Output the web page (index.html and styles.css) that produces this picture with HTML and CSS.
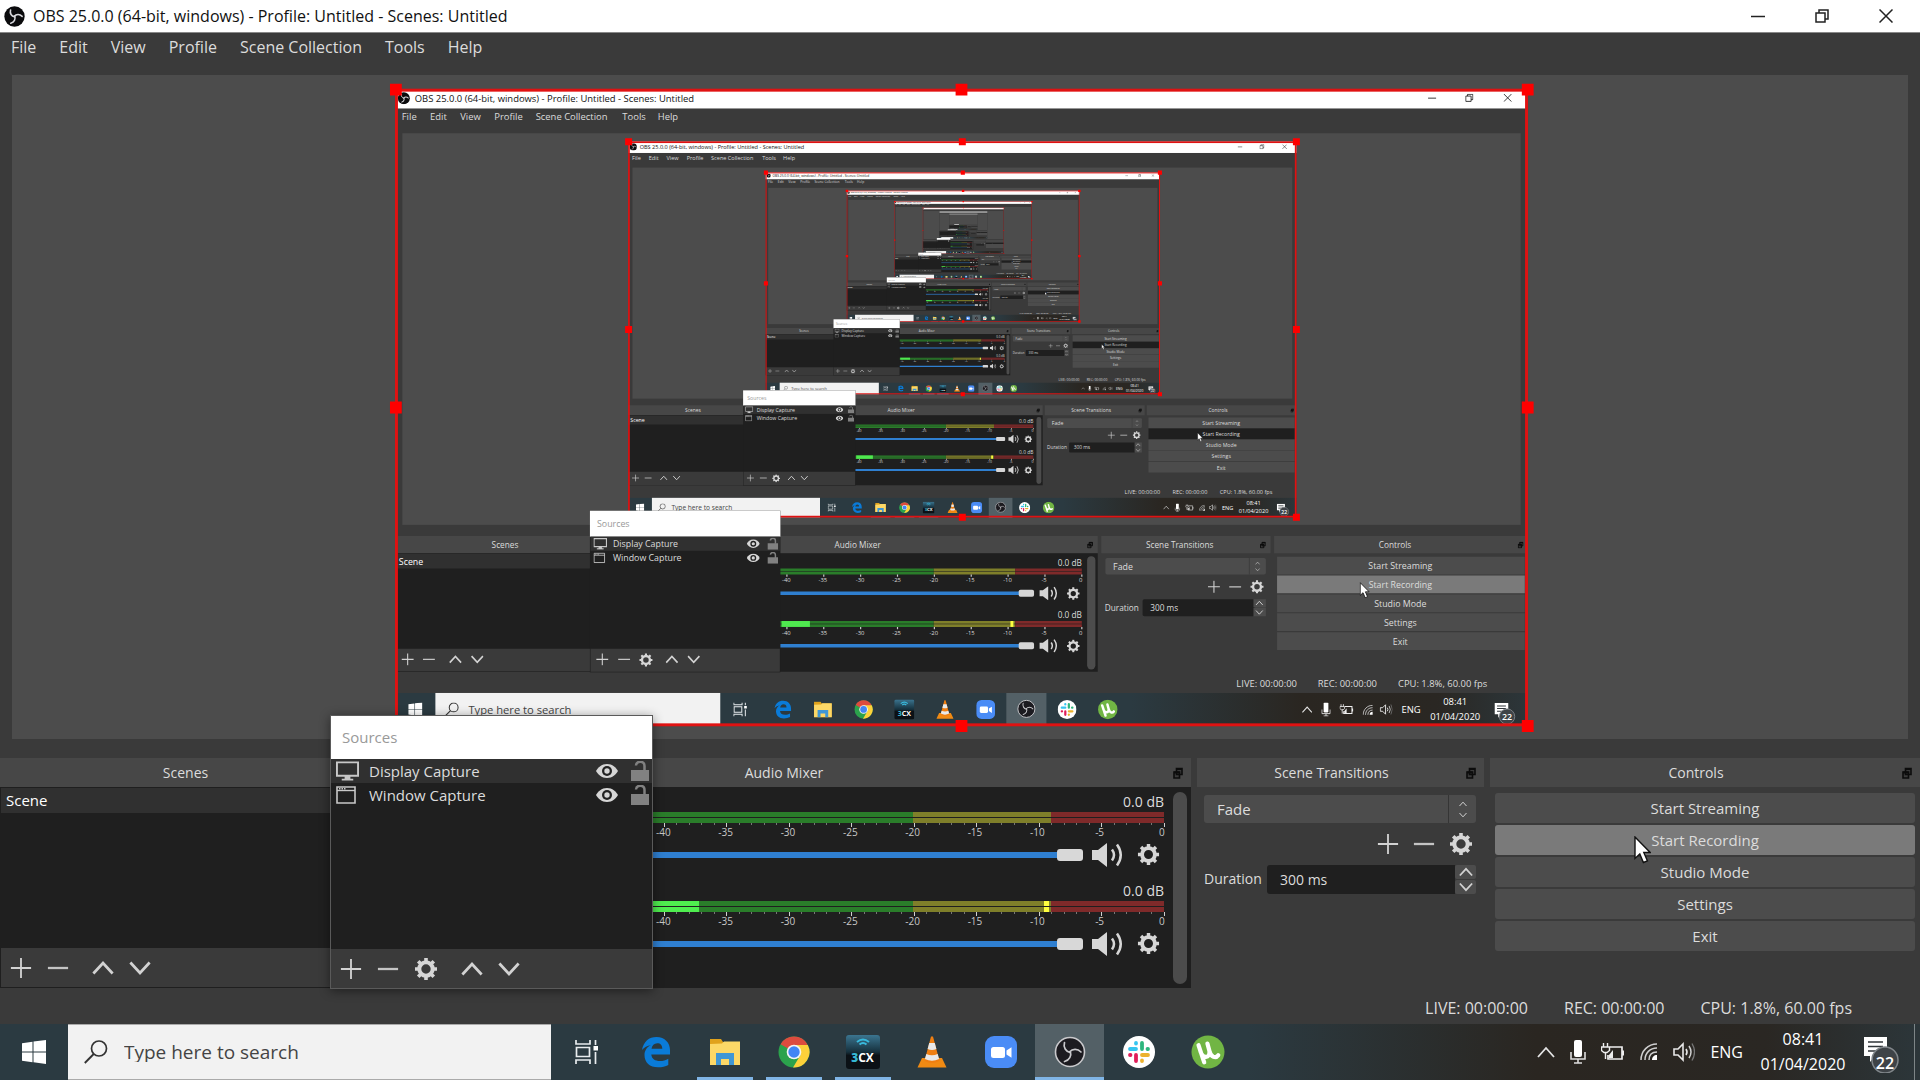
FILE: index.html
```html
<!DOCTYPE html>
<html lang="en">
<head>
<meta charset="utf-8">
<title>OBS 25.0.0 (64-bit, windows) - Profile: Untitled - Scenes: Untitled</title>
<link rel="stylesheet" href="styles.css">
</head>
<body>

<svg class="sprite" aria-hidden="true">
  <symbol id="i-obs" viewBox="0 0 32 32">
    <circle cx="16" cy="16" r="15.500" fill="#0b0b0d"/>
    <g fill="none" stroke="#d9d9dd" stroke-width="2.400" stroke-linecap="round">
      <path d="M16 16.500C11.500 15.500 8.500 11.500 10 6"/>
      <path d="M16 16.500C11.500 15.500 8.500 11.500 10 6" transform="rotate(120 16 16)"/>
      <path d="M16 16.500C11.500 15.500 8.500 11.500 10 6" transform="rotate(240 16 16)"/>
    </g>
  </symbol>
  <symbol id="i-obs-task" viewBox="0 0 32 32">
    <circle cx="16" cy="16" r="14.500" fill="#1c1b20" stroke="#c9c9cc" stroke-width="1.600"/>
    <g fill="none" stroke="#c9c9cc" stroke-width="1.700" stroke-linecap="round">
      <path d="M16 16.500C12 15.500 9 11.500 10.500 6.500"/>
      <path d="M16 16.500C12 15.500 9 11.500 10.500 6.500" transform="rotate(120 16 16)"/>
      <path d="M16 16.500C12 15.500 9 11.500 10.500 6.500" transform="rotate(240 16 16)"/>
    </g>
  </symbol>
  <symbol id="i-plus" viewBox="0 0 24 24"><path d="M12 1v22M1 12h22" stroke="#d2d2d2" stroke-width="2" fill="none"/></symbol>
  <symbol id="i-minus" viewBox="0 0 24 24"><path d="M1 12h22" stroke="#c4c4c4" stroke-width="2.500" fill="none"/></symbol>
  <symbol id="i-up" viewBox="0 0 24 24"><path d="M1.500 18L12 6.500 22.500 18" stroke="#d2d2d2" stroke-width="3" fill="none"/></symbol>
  <symbol id="i-down" viewBox="0 0 24 24"><path d="M1.500 6L12 17.500 22.500 6" stroke="#d2d2d2" stroke-width="3" fill="none"/></symbol>
  <symbol id="i-gear" viewBox="0 0 24 24">
    <circle cx="12" cy="12" r="6.700" fill="none" stroke="#d6d6d6" stroke-width="4"/>
    <path d="M12 1v4M12 19v4M1 12h4M19 12h4M4.200 4.200L7 7M17 17l2.800 2.800M4.200 19.800L7 17M17 7l2.800-2.800" stroke="#d6d6d6" stroke-width="3.600" fill="none"/>
  </symbol>
  <symbol id="i-speaker" viewBox="0 0 32 24">
    <path d="M0 7h6l9-7v24l-9-7H0z" fill="#d6d6d6"/>
    <path d="M20 6.500q4 5.500 0 11M25 1.500q7.500 10.500 0 21" fill="none" stroke="#d6d6d6" stroke-width="2.500"/>
  </symbol>
  <symbol id="i-eye" viewBox="0 0 22 16">
    <path d="M11 1C5.500 1 2 4.500 0 8c2 3.500 5.500 7 11 7s9-3.500 11-7c-2-3.500-5.500-7-11-7z" fill="#d6d6d6"/>
    <circle cx="11" cy="8" r="5" fill="#222"/><circle cx="11" cy="8" r="2.700" fill="#d6d6d6"/>
  </symbol>
  <symbol id="i-lock" viewBox="0 0 18 20">
    <path d="M0 9h18v11H0z" fill="#818181"/><path d="M5 4.500C5.500-.5 13.500-.5 13.500 5v5" fill="none" stroke="#818181" stroke-width="2.500"/>
  </symbol>
  <symbol id="i-monitor" viewBox="0 0 24 20">
    <path d="M1 1h22v14H1z" fill="none" stroke="#c8c8c8" stroke-width="2"/><path d="M9 15h6v3h3v2H6v-2h3z" fill="#c8c8c8"/>
  </symbol>
  <symbol id="i-window" viewBox="0 0 20 18">
    <path d="M1 1h18v16H1z" fill="none" stroke="#c8c8c8" stroke-width="1.600"/><path d="M1 4.500h18" stroke="#c8c8c8" stroke-width="1.400"/><path d="M3 2.700h7" stroke="#c8c8c8" stroke-width="1.500" stroke-dasharray="1.500 1"/>
  </symbol>
  <symbol id="i-float" viewBox="0 0 10 12"><path d="M3.500 1.500h5.500v6H3.500zM1 5h5.500v6H1z" fill="#3a3a3a" stroke="#0c0c0c" stroke-width="1.600"/><path d="M1 5.500h5.500M3.500 2h5.500" stroke="#0c0c0c" stroke-width="2"/></symbol>
  <symbol id="i-min" viewBox="0 0 14 14"><path d="M0 7.500h14" stroke="#222" stroke-width="1.500"/></symbol>
  <symbol id="i-restore" viewBox="0 0 14 14"><path d="M1 4h9v9H1zM4 4V1h9v9h-3" fill="none" stroke="#222" stroke-width="1.500"/></symbol>
  <symbol id="i-close" viewBox="0 0 14 14"><path d="M.5.5l13 13M13.500.5l-13 13" stroke="#222" stroke-width="1.500"/></symbol>
  <symbol id="i-cursor" viewBox="0 0 17 28"><path d="M1 1v21.500l4.800-4.500 3.600 8.500 4-1.700-3.600-8.300h6.400z" fill="#fff" stroke="#111" stroke-width="1.400"/></symbol>
  <symbol id="i-start" viewBox="0 0 24 24"><path d="M0 3.300L10.500 1.800V11.500H0zM11.500 1.600L24 0v11.500H11.500zM0 12.500h10.500v9.700L0 20.700zM11.500 12.500H24V24l-12.500-1.700z" fill="#fff"/></symbol>
  <symbol id="i-search" viewBox="0 0 24 24"><circle cx="15" cy="8.500" r="7.500" fill="none" stroke="#333" stroke-width="1.700"/><path d="M9.700 14L.8 23" stroke="#333" stroke-width="1.900"/></symbol>
  <symbol id="i-taskview" viewBox="0 0 24 24"><path d="M1 0v4h14V0M1 24v-4h14v4M1.500 7.500h13v9h-13zM20.500 0v5M20.500 12v12" fill="none" stroke="#e8ecee" stroke-width="1.700"/><path d="M18.500 6h4.500v4.500h-4.500z" fill="#fff"/></symbol>
  <symbol id="i-edge" viewBox="0 0 32 32"><path d="M2 14C3.500 5.500 9 1 16.500 1 25 1 30 7 30 14v4.500H11.300c.4 4.500 4 6.500 8.500 6.500 3.200 0 6-.9 8.500-2.300v6.200C25.500 30.500 22 31.300 18 31.300 9.700 31.300 4.500 26.500 4.500 19 4.500 14.500 7 11 11 9 7.500 9.500 4 11.500 2 14zM11.500 12.800h10.800c0-3.500-1.800-5.500-5-5.500-3.300 0-5.200 2.200-5.800 5.500z" fill="#0a7bd8"/></symbol>
  <symbol id="i-folder" viewBox="0 0 32 28"><path d="M1 1h11l2 3h17v23H1z" fill="#e0a21c"/><path d="M1 6l12-.5 2-2h16V27H1z" fill="#fcd867"/><path d="M7 15h18v12h-5v-6h-8v6H7z" fill="#3f97d6"/></symbol>
  <symbol id="i-chrome" viewBox="0 0 32 32">
    <circle cx="16" cy="16" r="15.500" fill="#2ba24c"/>
    <path d="M16 16L2.600 8.200A15.500 15.500 0 0 1 29.500 8.500z" fill="#dd4b3e"/>
    <path d="M16 9h13.800A15.500 15.500 0 0 1 15 31.500L22.500 19z" fill="#fdd13a"/>
    <circle cx="16" cy="16" r="7.300" fill="#f5f5f5"/><circle cx="16" cy="16" r="5.700" fill="#4285f4"/>
  </symbol>
  <symbol id="i-3cx" viewBox="0 0 34 34">
    <linearGradient id="cxbg" x2="0" y2="1"><stop offset="0" stop-color="#3b7590"/><stop offset=".5" stop-color="#16303c"/><stop offset=".6" stop-color="#0b1116"/></linearGradient>
    <rect width="34" height="34" rx="3" fill="url(#cxbg)"/>
    <path d="M11 7q6-5 12 0M13.500 9.500q3.500-3 7 0" fill="none" stroke="#38b9dc" stroke-width="2"/>
  </symbol>
  <symbol id="i-vlc" viewBox="0 0 30 32">
    <path d="M5 22h20l4.500 9.500H.5z" fill="#f08a13"/><path d="M14 .5h2L22.500 25q-7.500 4-15 0z" fill="#ef7f12"/>
    <path d="M12.200 7h5.600l1.600 6q-4.400 2-8.800 0zM9.300 18q5.700 2.500 11.400 0l1.400 5q-7.100 3.500-14.200 0z" fill="#e9e9e9"/>
  </symbol>
  <symbol id="i-zoom" viewBox="0 0 32 32"><rect width="32" height="32" rx="9" fill="#4a8cf6"/><rect x="6" y="11" width="14" height="11" rx="2.500" fill="#fff"/><path d="M21.500 14.500l5-3.300v10.600l-5-3.300z" fill="#fff"/></symbol>
  <symbol id="i-slack" viewBox="0 0 32 32">
    <circle cx="16" cy="16" r="16" fill="#fff"/>
    <g stroke-width="3.800" stroke-linecap="round" fill="none">
      <path d="M13 7v.5M7 13h6" stroke="#36c5f0"/><path d="M19 7v6M24.500 13h.5" stroke="#2eb67d"/>
      <path d="M19 19h6M19 24.500v.5" stroke="#ecb22e"/><path d="M13 19v6M7 19h.5" stroke="#e01e5a"/>
    </g>
  </symbol>
  <symbol id="i-utorrent" viewBox="0 0 34 34"><circle cx="17" cy="17" r="16.500" fill="#71b544"/><path d="M8 9.500L12.500 27M9 13.500C10.500 24 19 24 18.500 16L17 8.500M18.500 16c1 7 6 8 8.500 5" transform="rotate(-4 17 17)" fill="none" stroke="#fff" stroke-width="4.200" stroke-linecap="round"/></symbol>
  <symbol id="i-tray-up" viewBox="0 0 18 12"><path d="M1 11l8-9 8 9" fill="none" stroke="#e4e4e4" stroke-width="1.800"/></symbol>
  <symbol id="i-mic" viewBox="0 0 16 24"><rect x="4" y="0" width="8" height="17" rx="2" fill="#fff"/><path d="M1 12v7h14v-7M8 19v4M4 23h8" fill="none" stroke="#ddd" stroke-width="1.600"/></symbol>
  <symbol id="i-battery" viewBox="0 0 24 20"><path d="M9 5h12v12H7v-4" fill="none" stroke="#eee" stroke-width="1.700"/><path d="M22 8.500v5" stroke="#eee" stroke-width="2"/><path d="M2.500 1v4M6.500 1v4M.5 5h8v3.500l-2.500 2h-3l-2.500-2zM4.500 10v7" fill="none" stroke="#eee" stroke-width="1.400"/><path d="M8 13l4-5v8H8z" fill="#eee"/></symbol>
  <symbol id="i-wifi" viewBox="0 0 18 18"><g fill="none" stroke="#cfcfcf" stroke-width="1.500"><path d="M1 17C1 8 8 1 17 1M5 17C5 10 10 5 17 5M9 17c0-5 3-8 8-8"/></g><path d="M17 12v5h-5c0-3 2-5 5-5z" fill="#fff"/></symbol>
  <symbol id="i-volume" viewBox="0 0 22 20"><path d="M1 7h4l5-5v16l-5-5H1zM13 7q2 3 0 6" fill="none" stroke="#e8e8e8" stroke-width="1.600"/><path d="M16 4q4 6 0 12" fill="none" stroke="#d0d0d0" stroke-width="1.500"/><path d="M19 1.500q5 8.500 0 17" fill="none" stroke="#777" stroke-width="1.300"/></symbol>
  <symbol id="i-notify" viewBox="0 0 38 36">
    <path d="M1 0h23v19H12l-5 6v-6H1z" fill="#fff"/><path d="M5 5h15M5 9.500h15M5 14h10" stroke="#30363a" stroke-width="1.700"/>
    <circle cx="22" cy="23" r="13" fill="#3e4347" stroke="#80868a" stroke-width="1.500"/>
  </symbol>
</svg>

<header class="titlebar">
  <svg class="ic logo"><use href="#i-obs"/></svg>
  <h1>OBS 25.0.0 (64-bit, windows) - Profile: Untitled - Scenes: Untitled</h1>
  <div class="winbtns">
    <button aria-label="Minimize"><svg class="ic s14"><use href="#i-min"/></svg></button>
    <button aria-label="Restore"><svg class="ic s14"><use href="#i-restore"/></svg></button>
    <button aria-label="Close"><svg class="ic s14"><use href="#i-close"/></svg></button>
  </div>
</header>

<nav class="menubar">
  <a href="#">File</a><a href="#">Edit</a><a href="#">View</a><a href="#">Profile</a><a href="#">Scene Collection</a><a href="#">Tools</a><a href="#">Help</a>
</nav>

<main class="preview">
  <svg class="canvas" viewBox="0 0 1920 1080" role="img" aria-label="Display capture preview">
    <defs>
      <linearGradient id="bar">
        <stop offset="0" stop-color="#2b3a41"/><stop offset=".65" stop-color="#2b3a41"/><stop offset=".8" stop-color="#2a2621"/><stop offset=".92" stop-color="#2a2723"/><stop offset="1" stop-color="#2c363a"/>
      </linearGradient>
    </defs>
    <g id="desk">
      <rect width="1920" height="1080" fill="#3a3a3a"/>
      <rect width="1920" height="33" fill="#fff"/>
      <use href="#i-obs" x="4" y="5" width="21" height="21"/>
      <text x="33" y="22" class="dark lg">OBS 25.0.0 (64-bit, windows) - Profile: Untitled - Scenes: Untitled</text>
      <use href="#i-min" x="1751" y="8" width="14" height="14"/><use href="#i-restore" x="1814" y="8" width="14" height="14"/><use href="#i-close" x="1879" y="8" width="14" height="14"/>
      <g class="lg"><text x="11" y="53">File</text><text x="59" y="53">Edit</text><text x="110" y="53">View</text><text x="168" y="53">Profile</text><text x="238" y="53">Scene Collection</text><text x="385" y="53">Tools</text><text x="445" y="53">Help</text></g>
      <rect x="12" y="75" width="1896" height="664" fill="#4c4c4c"/>
      <path d="M0 758h371v29H0zM377 758h814v29H377zM1197 758h287v29h-287zM1490 758h430v29h-430z" fill="#474747"/>
      <path d="M0 787h371v201H0zM377 787h814v201H377z" fill="#1f1f1f"/>
      <path d="M1 788h369v25H1z" fill="#303030"/><path d="M2 949h367v38H2z" fill="#3a3a3a"/>
      <g class="sm"><text x="186" y="778" class="mid">Scenes</text><text x="784" y="778" class="mid">Audio Mixer</text><text x="1330" y="778" class="mid">Scene Transitions</text><text x="1695" y="778" class="mid">Controls</text></g>
      <use href="#i-float" x="1173" y="767" width="10" height="12"/><use href="#i-float" x="1466" y="767" width="10" height="12"/><use href="#i-float" x="1903" y="767" width="10" height="12"/>
      <text x="6" y="807" class="white">Scene</text>
      <use href="#i-plus" x="10" y="956" width="22" height="22"/><use href="#i-minus" x="46" y="956" width="22" height="22"/><use href="#i-up" x="91" y="956" width="22" height="22"/><use href="#i-down" x="128" y="956" width="22" height="22"/>
      <g id="strip">
        <text x="1164" y="808" class="end sm">0.0 dB</text>
        <path d="M414 813h499v10H414z" fill="#2a7d2a"/><path d="M913 813h138v10H913z" fill="#7f7f2a"/><path d="M1051 813h113v10h-113z" fill="#7f2a2a"/><path d="M414 818h750" stroke="#1f1f1f"/>
        <path d="M663 825h502" stroke="#ccc" stroke-width="4" stroke-dasharray="2 60.500"/>
        <g class="tiny"><text x="663" y="836">-40</text><text x="725" y="836">-35</text><text x="788" y="836">-30</text><text x="850" y="836">-25</text><text x="913" y="836">-20</text><text x="975" y="836">-15</text><text x="1038" y="836">-10</text><text x="1100" y="836">-5</text><text x="1162" y="836">0</text></g>
        <path d="M414 855h645" stroke="#2f7fd0" stroke-width="6"/><rect x="1057" y="849" width="26" height="12" rx="3" fill="#d6d6d6"/>
        <use href="#i-speaker" x="1092" y="843" width="32" height="24"/><use href="#i-gear" x="1138" y="844" width="23" height="23"/>
      </g>
      <use href="#strip" y="89"/>
      <path d="M655 902h48v10h-48z" fill="#4fe84f"/><path d="M1043 902h5v10h-5z" fill="#ffff40"/>
      <rect x="1173" y="792" width="14" height="192" rx="7" fill="#4c4c4c"/>
      <rect x="1204" y="795" width="272" height="28" rx="3" fill="#4c4c4c"/><path d="M1448 795v28" stroke="#333"/><text x="1217" y="816">Fade</text>
      <use href="#i-up" x="1457" y="800" width="10" height="8"/><use href="#i-down" x="1457" y="811" width="10" height="8"/>
      <use href="#i-plus" x="1377" y="833" width="22" height="22"/><use href="#i-minus" x="1413" y="833" width="22" height="22"/><use href="#i-gear" x="1449" y="832" width="24" height="24"/>
      <text x="1203" y="885" class="sm">Duration</text><rect x="1267" y="865" width="190" height="29" rx="3" fill="#1f1f1f"/><text x="1280" y="885" class="sm">300 ms</text>
      <path d="M1455 865h21v14h-21zM1455 880h21v14h-21z" fill="#4c4c4c"/><use href="#i-up" x="1457" y="865" width="16" height="13"/><use href="#i-down" x="1457" y="881" width="16" height="13"/>
      <path d="M1495 793h420v30h-420zM1495 857h420v30h-420zM1495 889h420v30h-420zM1495 921h420v30h-420z" fill="#4c4c4c"/><path d="M1495 825h420v30h-420z" class="hot"/>
      <g class="mid"><text x="1704" y="814">Start Streaming</text><text x="1704" y="846">Start Recording</text><text x="1704" y="878">Studio Mode</text><text x="1704" y="910">Settings</text><text x="1704" y="943">Exit</text></g>
      <use href="#i-cursor" x="1635" y="836" width="17" height="28"/>
      <g class="lg"><text x="1426" y="1014">LIVE: 00:00:00</text><text x="1564" y="1014">REC: 00:00:00</text><text x="1700" y="1014">CPU: 1.8%, 60.00 fps</text></g>
      <rect y="1024" width="1920" height="56" fill="url(#bar)"/>
      <rect x="68" y="1024" width="483" height="56" fill="#f2f2f2"/>
      <use href="#i-start" x="22" y="1040" width="24" height="24"/><use href="#i-search" x="84" y="1040" width="24" height="24"/>
      <text x="124" y="1059" class="find">Type here to search</text>
      <path d="M1036 1024h68v56h-68z" fill="#536066"/><path d="M697 1077h56v3h-56zM766 1077h56v3h-56zM835 1077h56v3h-56zM1036 1077h68v3h-68z" fill="#80b5e6"/>
      <use href="#i-taskview" x="573" y="1040" width="24" height="24"/><use href="#i-edge" x="641" y="1036" width="32" height="32"/><use href="#i-folder" x="709" y="1038" width="32" height="28"/><use href="#i-chrome" x="778" y="1036" width="32" height="32"/><use href="#i-3cx" x="846" y="1035" width="34" height="34"/><text x="863" y="1063" class="mid cx"><tspan class="cx3">3</tspan>CX</text><use href="#i-vlc" x="917" y="1036" width="30" height="32"/><use href="#i-zoom" x="985" y="1036" width="32" height="32"/><use href="#i-obs-task" x="1054" y="1035" width="32" height="32"/><use href="#i-slack" x="1123" y="1036" width="32" height="32"/><use href="#i-utorrent" x="1191" y="1035" width="34" height="34"/>
      <use href="#i-tray-up" x="1537" y="1046" width="18" height="12"/><use href="#i-mic" x="1570" y="1040" width="16" height="24"/><use href="#i-battery" x="1601" y="1042" width="24" height="20"/><use href="#i-wifi" x="1640" y="1044" width="18" height="18"/><use href="#i-volume" x="1669" y="1042" width="22" height="20"/>
      <g class="lg"><text x="1706" y="1058" class="white">ENG</text><text x="1797" y="1044" class="mid white">08:41</text><text x="1797" y="1069" class="mid white">01/04/2020</text></g>
      <use href="#i-notify" x="1863" y="1041" width="38" height="36"/><text x="1885" y="1070" class="mid white badge">22</text>
    </g>
    <g class="deep" transform="translate(395 89) scale(.59)"><use href="#desk"/>
      <g transform="translate(395 89) scale(.59)"><use href="#desk"/>
        <g transform="translate(395 89) scale(.59)"><use href="#desk"/>
          <g transform="translate(395 89) scale(.59)"><use href="#desk"/>
            <g transform="translate(395 89) scale(.59)"><use href="#desk"/>
              <g transform="translate(395 89) scale(.59)"><use href="#desk"/>
                <g transform="translate(395 89) scale(.59)"><use href="#desk"/><use href="#sources"/></g>
              <use href="#sources"/></g>
            <use href="#sources"/><use href="#frame"/></g>
          <use href="#sources"/><use href="#frame"/></g>
        <use href="#sources"/><use href="#frame"/></g>
      <use href="#sources"/><use href="#frame"/></g>
    <use href="#sources"/><use href="#frame"/></g>
    <g id="sources">
      <rect x="330" y="715" width="323" height="274" fill="#1f1f1f"/><rect x="330" y="715" width="323" height="44" fill="#fff"/>
      <text x="342" y="742" class="pale">Sources</text>
      <rect x="331" y="759" width="321" height="24" fill="#303030"/><rect x="331" y="949" width="321" height="39" fill="#3a3a3a"/>
      <use href="#i-monitor" x="336" y="761" width="23" height="20"/><use href="#i-window" x="336" y="786" width="20" height="18"/>
      <text x="369" y="777">Display Capture</text><text x="369" y="801">Window Capture</text>
      <use href="#i-eye" x="596" y="763" width="22" height="16"/><use href="#i-eye" x="596" y="787" width="22" height="16"/>
      <use href="#i-lock" x="631" y="761" width="18" height="20"/><use href="#i-lock" x="631" y="785" width="18" height="20"/>
      <use href="#i-plus" x="340" y="956" width="22" height="22"/><use href="#i-minus" x="377" y="956" width="22" height="22"/><use href="#i-gear" x="413" y="956" width="24" height="24"/><use href="#i-up" x="458" y="956" width="22" height="22"/><use href="#i-down" x="495" y="956" width="22" height="22"/>
    </g>
    <g id="frame">
      <rect x="2" y="2" width="1916" height="1076" fill="none" stroke="#e01212" stroke-width="5"/>
      <path d="M-9-9h20v20H-9zM950-9h20v20h-20zM1910-9h20v20h-20zM-9 530h20v20H-9zM1910 530h20v20h-20zM-9 1070h20v20H-9zM950 1070h20v20h-20zM1910 1070h20v20h-20z" fill="#f00"/>
    </g>
  </svg>
</main>

<div class="docks">
  <section class="dock">
    <h2 class="plain"><span>Scenes</span></h2>
    <div class="listbox">
      <ul class="scenes"><li>Scene</li></ul>
      <div class="tools">
        <button aria-label="Add scene"><svg class="ic s22"><use href="#i-plus"/></svg></button>
        <button aria-label="Remove scene"><svg class="ic s22"><use href="#i-minus"/></svg></button>
        <button class="sep" aria-label="Move scene up"><svg class="ic s22"><use href="#i-up"/></svg></button>
        <button aria-label="Move scene down"><svg class="ic s22"><use href="#i-down"/></svg></button>
      </div>
    </div>
  </section>

  <section class="dock">
    <h2 class="wide"><span>Audio Mixer</span><svg class="ic float"><use href="#i-float"/></svg></h2>
    <div class="mixer">
      <div class="strips">
        <div class="strip">
          <output>0.0 dB</output>
          <div class="meter"></div>
          <div class="ticks"></div>
          <div class="scale"><span>-60</span><span>-55</span><span>-50</span><span>-45</span><span>-40</span><span>-35</span><span>-30</span><span>-25</span><span>-20</span><span>-15</span><span>-10</span><span>-5</span><span>0</span></div>
          <div class="fader">
            <input type="range" aria-label="Desktop volume" value="100">
            <button aria-label="Mute desktop"><svg class="ic spk"><use href="#i-speaker"/></svg></button>
            <button aria-label="Desktop audio settings"><svg class="ic s23"><use href="#i-gear"/></svg></button>
          </div>
        </div>
        <div class="strip">
          <output>0.0 dB</output>
          <div class="meter"><i class="level" style="width:38%"></i><i class="peak" style="left:84%"></i></div>
          <div class="ticks"></div>
          <div class="scale"><span>-60</span><span>-55</span><span>-50</span><span>-45</span><span>-40</span><span>-35</span><span>-30</span><span>-25</span><span>-20</span><span>-15</span><span>-10</span><span>-5</span><span>0</span></div>
          <div class="fader">
            <input type="range" aria-label="Microphone volume" value="100">
            <button aria-label="Mute microphone"><svg class="ic spk"><use href="#i-speaker"/></svg></button>
            <button aria-label="Microphone settings"><svg class="ic s23"><use href="#i-gear"/></svg></button>
          </div>
        </div>
      </div>
      <div class="scroll"></div>
    </div>
  </section>

  <section class="dock">
    <h2><span>Scene Transitions</span><svg class="ic float"><use href="#i-float"/></svg></h2>
    <div class="trans">
      <div class="combo">
        <select aria-label="Transition"><option>Fade</option></select>
        <span class="arrows"><svg class="ic tinyarrow"><use href="#i-up"/></svg><svg class="ic tinyarrow"><use href="#i-down"/></svg></span>
      </div>
      <div class="tbtns">
        <button aria-label="Add transition"><svg class="ic s22"><use href="#i-plus"/></svg></button>
        <button aria-label="Remove transition"><svg class="ic s22"><use href="#i-minus"/></svg></button>
        <button aria-label="Transition properties"><svg class="ic s24"><use href="#i-gear"/></svg></button>
      </div>
      <div class="duration">
        <label for="dur">Duration</label>
        <input id="dur" type="text" value="300 ms">
        <span class="spin"><button aria-label="Increase"><svg class="ic s14"><use href="#i-up"/></svg></button><button aria-label="Decrease"><svg class="ic s14"><use href="#i-down"/></svg></button></span>
      </div>
    </div>
  </section>

  <section class="dock">
    <h2><span>Controls</span><svg class="ic float"><use href="#i-float"/></svg></h2>
    <div class="controls">
      <button>Start Streaming</button>
      <button class="hover">Start Recording<svg class="ic cursor"><use href="#i-cursor"/></svg></button>
      <button>Studio Mode</button>
      <button>Settings</button>
      <button>Exit</button>
    </div>
  </section>

  <section class="popup">
    <h2>Sources</h2>
    <ul>
      <li class="sel"><svg class="ic mon"><use href="#i-monitor"/></svg><span>Display Capture</span><svg class="ic eye"><use href="#i-eye"/></svg><svg class="ic lock"><use href="#i-lock"/></svg></li>
      <li><svg class="ic win"><use href="#i-window"/></svg><span>Window Capture</span><svg class="ic eye"><use href="#i-eye"/></svg><svg class="ic lock"><use href="#i-lock"/></svg></li>
    </ul>
    <div class="tools">
      <button aria-label="Add source"><svg class="ic s22"><use href="#i-plus"/></svg></button>
      <button aria-label="Remove source"><svg class="ic s22"><use href="#i-minus"/></svg></button>
      <button aria-label="Source properties"><svg class="ic s24"><use href="#i-gear"/></svg></button>
      <button class="sep" aria-label="Move source up"><svg class="ic s22"><use href="#i-up"/></svg></button>
      <button aria-label="Move source down"><svg class="ic s22"><use href="#i-down"/></svg></button>
    </div>
  </section>
</div>

<div class="status"><span>LIVE: 00:00:00</span><span>REC: 00:00:00</span><span>CPU: 1.8%, 60.00 fps</span></div>

<footer class="taskbar">
  <button class="start" aria-label="Start"><svg class="ic s24"><use href="#i-start"/></svg></button>
  <label class="find-box"><svg class="ic s24"><use href="#i-search"/></svg><input type="text" placeholder="Type here to search" aria-label="Search"></label>
  <div class="apps">
    <button aria-label="Task View"><svg class="ic s24"><use href="#i-taskview"/></svg></button>
    <button aria-label="Edge"><svg class="ic s32"><use href="#i-edge"/></svg></button>
    <button class="open" aria-label="File Explorer"><svg class="ic folder"><use href="#i-folder"/></svg></button>
    <button class="open" aria-label="Chrome"><svg class="ic s32"><use href="#i-chrome"/></svg></button>
    <button class="open" aria-label="3CX"><svg class="ic s34"><use href="#i-3cx"/></svg><span class="cx-label"><b>3</b>CX</span></button>
    <button aria-label="VLC"><svg class="ic s32"><use href="#i-vlc"/></svg></button>
    <button aria-label="Zoom"><svg class="ic s32"><use href="#i-zoom"/></svg></button>
    <button class="open active" aria-label="OBS"><svg class="ic s32"><use href="#i-obs-task"/></svg></button>
    <button aria-label="Slack"><svg class="ic s32"><use href="#i-slack"/></svg></button>
    <button aria-label="uTorrent"><svg class="ic s34"><use href="#i-utorrent"/></svg></button>
  </div>
  <div class="tray">
    <svg class="ic t-up"><use href="#i-tray-up"/></svg>
    <svg class="ic t-mic"><use href="#i-mic"/></svg>
    <svg class="ic t-bat"><use href="#i-battery"/></svg>
    <svg class="ic t-wifi"><use href="#i-wifi"/></svg>
    <svg class="ic t-vol"><use href="#i-volume"/></svg>
    <span>ENG</span>
    <time class="clock"><span>08:41</span><span>01/04/2020</span></time>
    <button class="notify" aria-label="22 notifications"><svg class="ic t-not"><use href="#i-notify"/></svg><span class="count">22</span></button>
  </div>
</footer>
</body>
</html>
```
FILE: styles.css
```css
* { box-sizing: border-box; margin: 0; padding: 0; }

body {
  height: 100vh;
  min-height: 700px;
  display: flex;
  flex-direction: column;
  background: #3a3a3a;
  color: #dcdcdc;
  font: 15px/20px "Open Sans", "Noto Sans", sans-serif;
  overflow: hidden;
}

button, input, select { font: inherit; color: inherit; background: none; border: 0; outline: 0; }
button { display: flex; align-items: center; justify-content: center; }
h1, h2 { font: inherit; }
ul { list-style: none; }
a { color: inherit; text-decoration: none; }

.sprite { position: absolute; width: 0; height: 0; }
.ic { display: block; flex: none; }
.s14 { width: 14px; height: 14px; }
.s22 { width: 22px; height: 22px; }
.s23 { width: 23px; height: 23px; }
.s24 { width: 24px; height: 24px; }
.s32 { width: 32px; height: 32px; }
.s34 { width: 34px; height: 34px; }
.folder { width: 32px; height: 28px; }

/* Title and menu */
.titlebar { flex: none; height: 33px; display: flex; align-items: center; background: #fff; color: #111; padding-left: 4px; border-bottom: 1px solid #888; }
.titlebar h1 { margin-left: 8px; font-size: 16px; }
.logo { width: 21px; height: 21px; }
.winbtns { margin-left: auto; display: flex; padding-right: 2px; }
.winbtns button { width: 64px; height: 30px; }
.menubar { flex: none; height: 42px; display: flex; gap: 23px; padding: 4px 11px 0; font-size: 16px; }

/* Preview */
.preview { flex: 1 1 0; min-height: 0; display: flex; margin: 0 12px 19px; padding: 14px 12px 13px 15px; background: #4c4c4c; }
.canvas { flex: 1; min-width: 0; height: 100%; overflow: visible; font-size: 15px; --hot: #7a7a7a; }
.canvas text { fill: #dcdcdc; }
.canvas .lg { font-size: 16px; }
.canvas .sm { font-size: 14px; }
.canvas .dark { fill: #111; }
.canvas .white { fill: #fff; }
.canvas .pale { fill: #999; }
.canvas .find { fill: #444; font-size: 19px; }
.canvas .mid { text-anchor: middle; }
.canvas .end { text-anchor: end; }
.canvas .tiny { font-size: 10px; text-anchor: middle; }
.canvas .cx { font-size: 12px; font-weight: 700; fill: #fff; }
.canvas .cx3 { fill: #35b8d4; }
.canvas .badge { font-weight: 600; }
.canvas .hot { fill: var(--hot); }
.deep { --hot: #1f1f1f; }

/* Docks */
.docks { flex: none; height: 230px; position: relative; display: grid; grid-template-columns: 371fr 814fr 287fr 430fr; gap: 6px; }
.dock { display: flex; flex-direction: column; min-width: 0; }
.dock h2 { height: 29px; display: flex; align-items: center; background: #474747; padding-right: 8px; font-size: 14px; }
.dock h2 span { flex: 1; text-align: center; }
.dock .plain { padding-right: 0; }
.dock .wide { padding-left: 18px; }
.float { width: 10px; height: 12px; }

.listbox { flex: 1; display: flex; flex-direction: column; background: #1f1f1f; padding: 1px; }
.scenes { flex: 1; }
.scenes li { height: 25px; line-height: 25px; padding-left: 5px; background: #303030; color: #fff; }
.tools { flex: none; height: 39px; display: flex; align-items: center; gap: 15px; padding: 0 9px; background: #3a3a3a; }
.tools .sep { margin-left: 8px; }

.mixer { flex: 1; display: flex; background: #1f1f1f; padding: 5px 4px 4px 37px; }
.strips { flex: 1; }
.strip { height: 89px; padding-right: 9px; }
.strip output { display: block; text-align: right; height: 20px; line-height: 20px; font-size: 14px; }
.meter { position: relative; height: 11px; background: linear-gradient(#1f1f1f, #1f1f1f) 0 5px / 100% 1px no-repeat, linear-gradient(90deg, #2a7d2a 0 66.600%, #7f7f2a 66.600% 85%, #7f2a2a 85%); }
.meter i { position: absolute; top: 0; height: 11px; background: linear-gradient(#4fee4f 0 5px, #1f1f1f 5px 6px, #4fee4f 6px); }
.meter .level { left: 0; }
.meter .peak { width: 5px; background: linear-gradient(#ffff40 0 5px, #1f1f1f 5px 6px, #ffff40 6px); }
.ticks {
  height: 4px; margin-right: -1px;
  background:
    repeating-linear-gradient(90deg, #d0d0d0 0 1px, transparent 1px calc((100% - 1px) / 12)),
    repeating-linear-gradient(90deg, #777 0 1px, transparent 1px calc((100% - 1px) / 60)) 0 0 / 100% 2px no-repeat;
}
.scale { display: flex; justify-content: space-between; height: 10px; font-size: 10px; line-height: 10px; color: #c8c8c8; padding-right: 2px; }
.scale span { width: 0; display: flex; justify-content: center; }
.fader { display: flex; align-items: center; height: 35px; padding-right: 4px; }
.fader input { flex: 1; min-width: 0; height: 12px; appearance: none; margin-right: 9px; background: linear-gradient(#2f7fd0, #2f7fd0) 0 3px / 100% 6px no-repeat; }
.fader input::-webkit-slider-thumb { appearance: none; width: 26px; height: 12px; border-radius: 3px; background: #d8d8d8; }
.spk { width: 32px; height: 24px; margin-right: 13px; }
.scroll { width: 14px; border-radius: 7px; background: #4c4c4c; }

.trans { padding: 8px 8px 0 7px; display: flex; flex-direction: column; gap: 10px; }
.combo { display: flex; height: 28px; background: #4c4c4c; border-radius: 3px; }
.combo select { flex: 1; appearance: none; padding: 0 13px; }
.arrows { width: 28px; border-left: 1px solid #353535; display: flex; flex-direction: column; align-items: center; justify-content: center; gap: 3px; }
.tinyarrow { width: 10px; height: 8px; }
.tbtns { display: flex; justify-content: flex-end; align-items: center; gap: 14px; height: 22px; padding-right: 3px; }
.duration { display: flex; align-items: stretch; height: 29px; font-size: 14px; }
.duration label { line-height: 28px; margin-right: 3px; width: 60px; white-space: nowrap; }
.duration input { flex: 1; min-width: 0; background: #1f1f1f; border-radius: 3px 0 0 3px; padding: 0 13px; }
.spin { width: 21px; display: flex; flex-direction: column; gap: 1px; }
.spin button { flex: 1; min-height: 0; background: #4c4c4c; border-radius: 2px; }

.controls { display: flex; flex-direction: column; gap: 2px; padding: 6px 5px 0; }
.controls button { position: relative; height: 30px; background: #4c4c4c; border-radius: 3px; }
.controls .hover { background: #7a7a7a; }
.cursor { position: absolute; left: 33%; top: 11px; width: 17px; height: 28px; z-index: 2; }

/* Floating sources window */
.popup { position: absolute; left: 330px; top: -43px; width: 323px; height: 274px; display: flex; flex-direction: column; background: #1f1f1f; border: 1px solid #5a5a5a; box-shadow: 0 2px 10px rgba(0, 0, 0, .45); }
.popup h2 { height: 43px; line-height: 42px; padding-left: 11px; background: #fff; color: #999; }
.popup ul { flex: 1; }
.popup li { height: 24px; display: flex; align-items: center; padding: 0 3px 0 5px; }
.popup li span { flex: 1; }
.sel { background: #303030; }
.mon { width: 23px; height: 20px; margin-right: 10px; }
.win { width: 20px; height: 18px; margin-right: 13px; }
.eye { width: 22px; height: 16px; margin-right: 13px; }
.lock { width: 18px; height: 20px; }

.status { flex: none; height: 36px; display: flex; justify-content: flex-end; align-items: center; gap: 36px; padding: 3px 68px 0 0; font-size: 16px; }

/* Taskbar */
.taskbar { flex: none; height: 56px; display: flex; color: #fff; font-size: 16px; background: linear-gradient(90deg, #2b3a41 0 62%, #2b3a41 65%, #2a2621 80%, #2a2723 92%, #2c363a); }
.start { width: 68px; }
.find-box { width: 483px; display: flex; align-items: center; gap: 16px; padding-left: 16px; background: #f2f2f2; border: 1px solid #aaa; border-width: 1px 0; }
.find-box input { flex: 1; min-width: 0; font-size: 19px; color: #444; }
.find-box input::placeholder { color: #444; opacity: 1; }
.apps { display: flex; padding-left: 1px; }
.apps button { width: 69px; position: relative; }
.open { background: linear-gradient(#80b5e6, #80b5e6) 50% 100% / 56px 3px no-repeat; }
.active { background: linear-gradient(#80b5e6, #80b5e6) 50% 100% / 100% 3px no-repeat #536066; }
.cx-label { position: absolute; top: 26px; left: 0; right: 0; text-align: center; font-size: 12px; line-height: 16px; font-weight: 700; }
.cx-label b { color: #35b8d4; }
.tray { margin-left: auto; display: flex; align-items: center; gap: 15px; padding-right: 5px; }
.t-up { width: 18px; height: 12px; }
.t-mic { width: 16px; height: 24px; }
.t-bat { width: 24px; height: 20px; }
.t-wifi { width: 18px; height: 18px; }
.t-vol { width: 22px; height: 20px; }
.t-not { width: 38px; height: 36px; }
.clock { display: flex; flex-direction: column; align-items: center; width: 90px; line-height: 25px; }
.notify { position: relative; height: 56px; padding: 6px 13px 0 0; border-right: 1px solid #7d8587; }
.count { position: absolute; left: 9px; top: 29px; width: 26px; text-align: center; font-size: 16px; line-height: 20px; font-weight: 600; }
```
